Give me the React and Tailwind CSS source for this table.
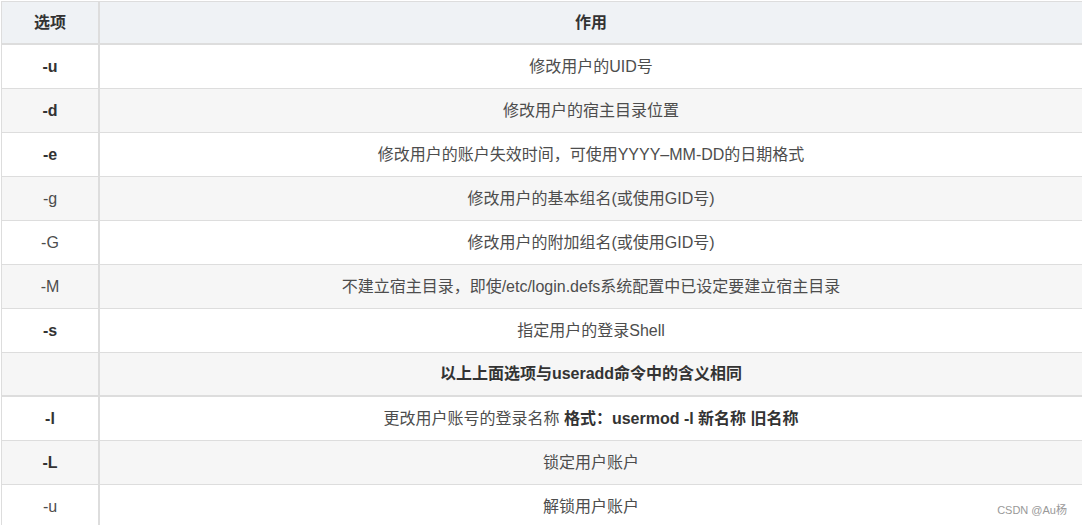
import React from "react";

const rows = [
  { opt: "-u", bold: true, desc: "修改用户的UID号" },
  { opt: "-d", bold: true, desc: "修改用户的宿主目录位置" },
  { opt: "-e", bold: true, desc: "修改用户的账户失效时间，可使用YYYY–MM-DD的日期格式" },
  { opt: "-g", bold: false, desc: "修改用户的基本组名(或使用GID号)" },
  { opt: "-G", bold: false, desc: "修改用户的附加组名(或使用GID号)" },
  { opt: "-M", bold: false, desc: "不建立宿主目录，即使/etc/login.defs系统配置中已设定要建立宿主目录" },
  { opt: "-s", bold: true, desc: "指定用户的登录Shell" },
  { opt: "", bold: false, desc: "以上上面选项与useradd命令中的含义相同", descBold: true, thick: true },
  {
    opt: "-l",
    bold: true,
    desc: (
      <>
        更改用户账号的登录名称 <span className="font-bold text-[#333]">格式：usermod -l 新名称 旧名称</span>
      </>
    ),
  },
  { opt: "-L", bold: true, desc: "锁定用户账户" },
  { opt: "-u", bold: false, desc: "解锁用户账户" },
];

export default function App() {
  return (
    <div
      className="relative w-[1082px] h-[525px] overflow-hidden bg-white pt-px pl-px text-[16px] text-[#4d4d4d]"
      style={{ fontFamily: '"Liberation Sans", "Noto Sans CJK SC", sans-serif' }}
    >
      <div className="w-[1082px] border-t border-l border-r border-[#dddddd]">
        <div className="flex h-[43px] border-b-2 border-[#dddddd] bg-[#eff2f5] font-bold text-[#333]">
          <div className="flex w-[98px] shrink-0 items-center justify-center border-r-2 border-[#dddddd]">选项</div>
          <div className="flex flex-1 items-center justify-center">作用</div>
        </div>
        {rows.map((r, i) => (
          <div
            key={i}
            className={
              "flex h-[44px] border-[#dddddd] " +
              (r.thick ? "border-b-2 " : "border-b ") +
              (i % 2 === 1 ? "bg-[#f6f6f6]" : "bg-white")
            }
          >
            <div
              className={
                "flex w-[98px] shrink-0 items-center justify-center border-r-2 border-[#dddddd] " +
                (r.bold ? "font-bold text-[#333]" : "")
              }
            >
              {r.opt}
            </div>
            <div
              className={
                "flex flex-1 items-center justify-center whitespace-pre " +
                (r.descBold ? "font-bold text-[#333]" : "")
              }
            >
              {r.desc}
            </div>
          </div>
        ))}
      </div>
      <div className="absolute right-[15px] bottom-[7px] text-[11px] text-[#999]">CSDN @Au杨</div>
    </div>
  );
}
